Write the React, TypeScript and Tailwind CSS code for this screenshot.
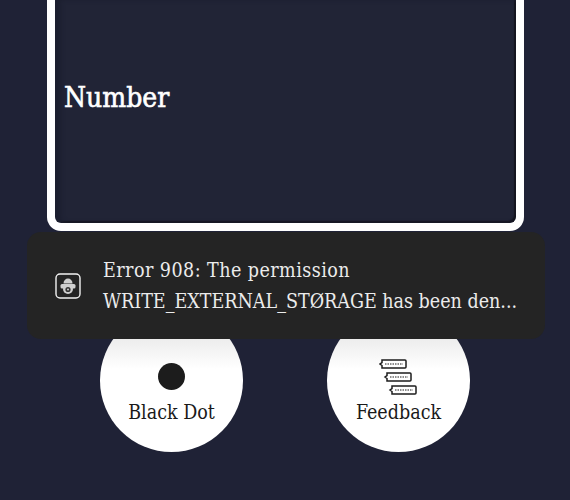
const slab = "font-['DejaVu_Serif_Condensed','DejaVu_Serif',serif] [font-stretch:condensed]";

function RobotIcon() {
  return (
    <svg width="26" height="26" viewBox="0 0 26 26" fill="none">
      <rect x="1" y="1" width="24" height="24" rx="4" stroke="#f2f2f2" strokeWidth="1.4" />
      <path d="M8.5 10.5a4.5 5 0 0 1 9 0z" fill="#cfcfcf" />
      <rect x="5.5" y="11" width="15" height="4.5" rx="1.5" fill="#cfcfcf" />
      <circle cx="13" cy="16" r="5" fill="#cfcfcf" />
      <circle cx="13" cy="16.5" r="2.6" fill="#333" />
      <circle cx="13" cy="16.5" r="1" fill="#cfcfcf" />
    </svg>
  );
}

function FeedbackIcon() {
  const tags = [0, 5, 10];
  return (
    <svg width="40" height="38" viewBox="0 0 40 38" fill="none">
      {tags.map((x, i) => (
        <g key={x}>
          <path
            d={`M${x + 3} ${3 + i * 13}h${23}a1 1 0 0 1 1 1v6a1 1 0 0 1-1 1h-${23}v-2.5l-2-1.5 2-1.5z`}
            fill="#fff"
            stroke="#1c1c1c"
            strokeWidth="1.5"
          />
          <path d={`M${x + 6} ${7 + i * 13}h18`} stroke="#1c1c1c" strokeWidth="1" strokeDasharray="1.5 1" />
        </g>
      ))}
    </svg>
  );
}

function RoundButton({ label, icon, className }: { label: string; icon: React.ReactNode; className?: string }) {
  return (
    <div
      className={`flex h-[143px] w-[143px] flex-col items-center rounded-full bg-white bg-gradient-to-b from-[#ececec] from-[20%] to-white to-[42%] ${className ?? ""}`}
    >
      <div className="mt-[45px] flex h-[44px] items-center justify-center">{icon}</div>
      <span className={`mt-[2px] text-[19.5px] leading-[26px] text-[#1a1a1a] ${slab}`}>{label}</span>
    </div>
  );
}

export default function App() {
  return (
    <div className="relative h-[500px] w-[570px] overflow-hidden bg-[#1f2236]">
      <div className="ml-[47px] h-[231px] w-[477px] rounded-b-[14px] border-x-[8px] border-b-[8px] border-white bg-[#212436] pl-[9px] pt-[78px] shadow-[inset_6px_0_4px_#1c1f30,inset_-2px_-2px_1px_#14151f]">
        <span className={`text-[28px] leading-[40px] text-white [-webkit-text-stroke:0.6px_white] ${slab}`}>Number</span>
      </div>

      <div className="mt-[78px] flex pl-[100px]">
        <RoundButton
          label="Black Dot"
          icon={<div className="h-[27px] w-[27px] rounded-full bg-[#1c1c1c]" />}
        />
        <RoundButton label="Feedback" icon={<FeedbackIcon />} className="ml-[84px]" />
      </div>

      <div className="absolute left-[27px] top-[232px] flex h-[107px] w-[518px] items-center rounded-[14px] bg-[#242424] pl-[28px]">
        <RobotIcon />
        <div className={`ml-[22px] whitespace-nowrap text-[19.5px] leading-[31px] text-[#ececec] ${slab}`}>
          <div className="tracking-[0.45px]">Error 908: The permission</div>
          <div>WRITE_EXTERNAL_STØRAGE has been den...</div>
        </div>
      </div>
    </div>
  );
}
